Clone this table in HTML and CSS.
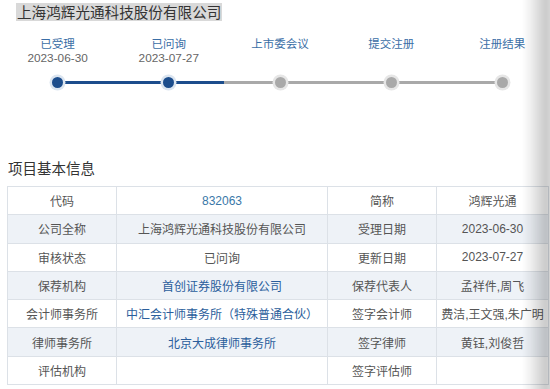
FILE: index.html
```html
<!DOCTYPE html>
<html lang="zh">
<head>
<meta charset="utf-8">
<link rel="stylesheet" href="styles.css">
</head>
<body>
<div class="page">
  <div class="title-row"><span class="title">上海鸿辉光通科技股份有限公司</span></div>

  <div class="steps">
    <div class="labels">
      <div class="step"><div class="lbl">已受理</div><div class="date">2023-06-30</div></div>
      <div class="step"><div class="lbl">已问询</div><div class="date">2023-07-27</div></div>
      <div class="step"><div class="lbl">上市委会议</div><div class="date"></div></div>
      <div class="step"><div class="lbl">提交注册</div><div class="date"></div></div>
      <div class="step"><div class="lbl">注册结果</div><div class="date"></div></div>
    </div>
    <div class="track">
      <span class="dot on"></span>
      <span class="seg on"></span>
      <span class="dot on"></span>
      <span class="seg half"></span>
      <span class="dot"></span>
      <span class="seg"></span>
      <span class="dot"></span>
      <span class="seg"></span>
      <span class="dot"></span>
    </div>
  </div>

  <h2 class="heading">项目基本信息</h2>

  <table class="info">
    <colgroup><col class="c1"><col class="c2"><col class="c3"><col class="c4"></colgroup>
    <tr><td>代码</td><td class="code">832063</td><td>简称</td><td>鸿辉光通</td></tr>
    <tr class="alt"><td>公司全称</td><td>上海鸿辉光通科技股份有限公司</td><td>受理日期</td><td>2023-06-30</td></tr>
    <tr><td>审核状态</td><td>已问询</td><td>更新日期</td><td>2023-07-27</td></tr>
    <tr class="alt"><td>保荐机构</td><td class="link">首创证券股份有限公司</td><td>保荐代表人</td><td>孟祥件,周飞</td></tr>
    <tr><td>会计师事务所</td><td class="link">中汇会计师事务所（特殊普通合伙）</td><td>签字会计师</td><td>费洁,王文强,朱广明</td></tr>
    <tr class="alt"><td>律师事务所</td><td class="link">北京大成律师事务所</td><td>签字律师</td><td>黄钰,刘俊哲</td></tr>
    <tr><td>评估机构</td><td></td><td>签字评估师</td><td></td></tr>
  </table>
</div>
<div class="edge-shadow"></div>
</body>
</html>
```

FILE: styles.css
```css
html, body {
  margin: 0;
  padding: 0;
  background: #fff;
  overflow: hidden;
}
body {
  width: 550px;
  height: 389px;
  font-family: "Liberation Sans", "Noto Sans CJK SC", sans-serif;
  color: #555;
}
.page {
  padding: 3px 0 0 7px;
}
.title-row {
  height: 18px;
  padding-left: 9px;
}
.title {
  display: inline-block;
  background: #d9d9d9;
  color: #333;
  font-size: 14.6px;
  line-height: 18px;
  height: 18px;
  padding: 0 1px;
  font-family: "Noto Sans CJK SC", sans-serif;
}
.steps {
  margin-top: 14px;
  margin-left: -5px;
  width: 556px;
}
.labels {
  display: flex;
}
.step {
  width: 111.2px;
  text-align: center;
}
.lbl {
  font-family: "Noto Sans CJK SC", sans-serif;
  font-size: 11.5px;
  line-height: 16px;
  color: #3a6ea6;
}
.date {
  font-size: 11.8px;
  line-height: 15px;
  height: 15px;
  color: #666;
}
.track {
  display: flex;
  align-items: center;
  margin-top: 8px;
  padding: 0 50px;
  height: 16px;
}
.dot {
  flex: none;
  width: 11px;
  height: 11px;
  border-radius: 50%;
  background: #a9a9a9;
  box-shadow: 0 0 0 2.5px #e6e6e6;
  position: relative;
  z-index: 1;
}
.dot.on {
  background: #1c4d8c;
  box-shadow: 0 0 0 2.5px #dbe5f0;
}
.seg {
  flex: 1;
  height: 3px;
  background: #a9a9a9;
  margin: 0 -1px;
}
.seg.on {
  background: #1c4d8c;
}
.seg.half {
  background: linear-gradient(to right, #1c4d8c 0, #1c4d8c 50%, #a9a9a9 50%, #a9a9a9 100%);
}
.heading {
  margin: 69px 0 0 1px;
  font-family: "Noto Sans CJK SC", sans-serif;
  font-weight: normal;
  font-size: 14.5px;
  line-height: 18px;
  color: #333;
}
.info {
  margin-top: 9px;
  border-collapse: collapse;
  table-layout: fixed;
  width: 541px;
  font-family: "Liberation Sans", "Noto Sans CJK SC", sans-serif;
  font-size: 12px;
  color: #555;
}
.c1 { width: 109px; }
.c2 { width: 211px; }
.c3 { width: 109px; }
.c4 { width: 112px; }
.info td {
  border: 1px solid #dce1e7;
  height: 27.3px;
  padding: 0;
  text-align: center;
  white-space: nowrap;
  overflow: hidden;
}
.info tr.alt td {
  background: #eef2f7;
}
.info td.code {
  color: #3a78a8;
}
.info td.link {
  color: #2b5e9c;
}
.edge-shadow {
  position: fixed;
  top: 0;
  right: 0;
  width: 28px;
  height: 389px;
  background: linear-gradient(to right, rgba(0,0,0,0) 0, rgba(0,0,0,0.06) 30%, rgba(0,0,0,0.17) 70%, rgba(0,0,0,0.2) 85%, rgba(0,0,0,0.17) 100%);
  pointer-events: none;
}
```
